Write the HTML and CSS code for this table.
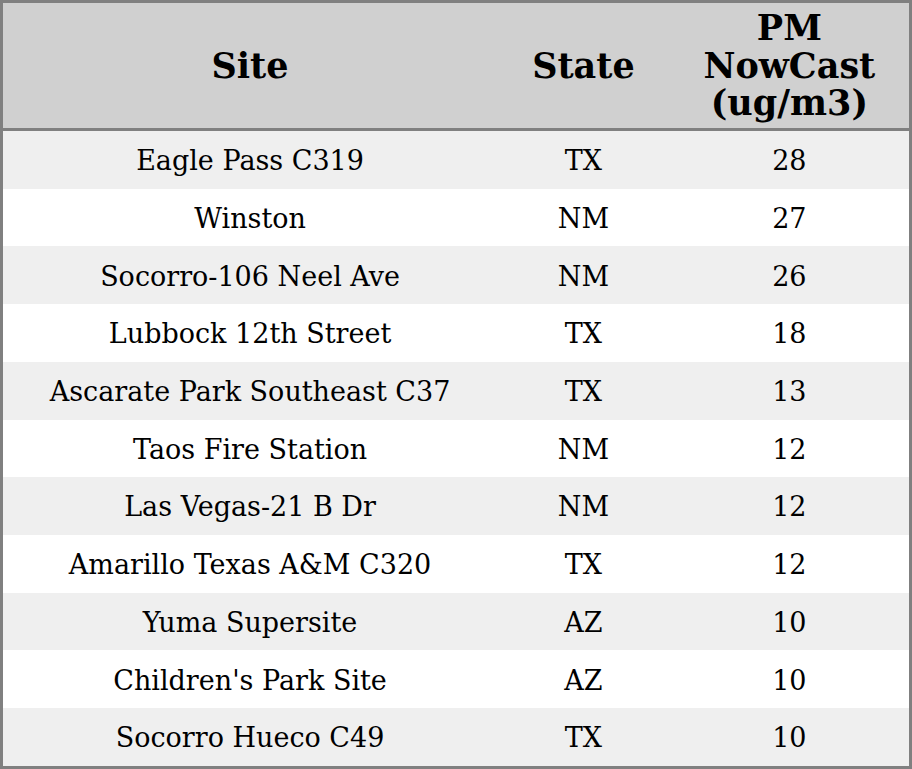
FILE: index.html
```html
<!DOCTYPE html>
<html>
<head>
<meta charset="utf-8">
<link rel="stylesheet" href="styles.css">
</head>
<body>
<table class="aq">
  <colgroup>
    <col class="c-site">
    <col class="c-state">
    <col class="c-pm">
  </colgroup>
  <thead>
    <tr><th>Site</th><th>State</th><th>PM<br>NowCast<br>(ug/m3)</th></tr>
  </thead>
  <tbody>
    <tr><td>Eagle Pass C319</td><td>TX</td><td>28</td></tr>
    <tr><td>Winston</td><td>NM</td><td>27</td></tr>
    <tr><td>Socorro-106 Neel Ave</td><td>NM</td><td>26</td></tr>
    <tr><td>Lubbock 12th Street</td><td>TX</td><td>18</td></tr>
    <tr><td>Ascarate Park Southeast C37</td><td>TX</td><td>13</td></tr>
    <tr><td>Taos Fire Station</td><td>NM</td><td>12</td></tr>
    <tr><td>Las Vegas-21 B Dr</td><td>NM</td><td>12</td></tr>
    <tr><td>Amarillo Texas A&amp;M C320</td><td>TX</td><td>12</td></tr>
    <tr><td>Yuma Supersite</td><td>AZ</td><td>10</td></tr>
    <tr><td>Children's Park Site</td><td>AZ</td><td>10</td></tr>
    <tr><td>Socorro Hueco C49</td><td>TX</td><td>10</td></tr>
  </tbody>
</table>
</body>
</html>
```
FILE: styles.css
```css
html, body {
  margin: 0;
  padding: 0;
  background: #ffffff;
}
.aq {
  width: 912px;
  border-collapse: collapse;
  table-layout: fixed;
  border: 3px solid #808080;
  font-family: "DejaVu Serif", serif;
  color: #000;
}
.c-site { width: 494px; }
.c-state { width: 172px; }
.c-pm { width: 240px; }
.aq th {
  background: #d0d0d0;
  font-size: 35px;
  font-weight: bold;
  line-height: 37.5px;
  height: 125px;
  padding: 0;
  text-align: center;
  vertical-align: middle;
  border-bottom: 3px solid #808080;
}
.aq td {
  font-size: 27px;
  height: 56.23px;
  padding: 1.5px 0 0;
  text-align: center;
  vertical-align: middle;
}
.aq tbody tr:nth-child(odd) td {
  background: #efefef;
}
```
